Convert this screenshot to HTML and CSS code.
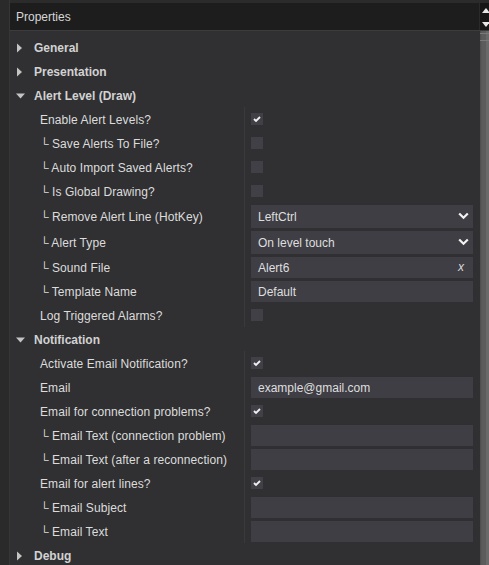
FILE: index.html
```html
<!DOCTYPE html>
<html>
<head>
<meta charset="utf-8">
<link rel="stylesheet" href="styles.css">
</head>
<body>
<div class="app">
  <div class="gutter"></div>
  <div class="win">
    <div class="header">
      <div class="title">Properties</div>
      <div class="sbtns">
        <svg width="9" height="27" viewBox="0 0 9 27"><path d="M2 10 L6 5 L10 10 Z" fill="#e8e8e8"/><path d="M2 19 L6 24 L10 19 Z" fill="#e8e8e8"/></svg>
      </div>
    </div>
    <div class="content">
      <div class="list">
        <div class="row group"><span class="tri"><svg width="10" height="10" viewBox="0 0 10 10"><path d="M1 0.5 L6 5 L1 9.5 Z" fill="#c4c4c4"/></svg></span><span class="glabel">General</span></div>
        <div class="row group"><span class="tri"><svg width="10" height="10" viewBox="0 0 10 10"><path d="M1 0.5 L6 5 L1 9.5 Z" fill="#c4c4c4"/></svg></span><span class="glabel">Presentation</span></div>
        <div class="row group"><span class="tri"><svg width="10" height="10" viewBox="0 0 10 10"><path d="M0 2.5 L9 2.5 L4.5 7.5 Z" fill="#c4c4c4"/></svg></span><span class="glabel">Alert Level (Draw)</span></div>

        <div class="row prop"><div class="label">Enable Alert Levels?</div><div class="value"><span class="cb on"><svg width="12" height="12" viewBox="0 0 12 12"><path d="M3 6 L5 8 L9 4" stroke="#f0f0f0" stroke-width="1.8" fill="none"/></svg></span></div></div>
        <div class="row prop"><div class="label">└ Save Alerts To File?</div><div class="value"><span class="cb"></span></div></div>
        <div class="row prop"><div class="label">└ Auto Import Saved Alerts?</div><div class="value"><span class="cb"></span></div></div>
        <div class="row prop"><div class="label">└ Is Global Drawing?</div><div class="value"><span class="cb"></span></div></div>
        <div class="row prop tall"><div class="label">└ Remove Alert Line (HotKey)</div><div class="value"><div class="field sel"><span>LeftCtrl</span><svg width="11" height="8" viewBox="0 0 11 8"><path d="M1.2 1.5 L5.5 5.8 L9.8 1.5" stroke="#f2f2f2" stroke-width="2.2" fill="none"/></svg></div></div></div>
        <div class="row prop tall"><div class="label">└ Alert Type</div><div class="value"><div class="field sel"><span>On level touch</span><svg width="11" height="8" viewBox="0 0 11 8"><path d="M1.2 1.5 L5.5 5.8 L9.8 1.5" stroke="#f2f2f2" stroke-width="2.2" fill="none"/></svg></div></div></div>
        <div class="row prop"><div class="label">└ Sound File</div><div class="value"><div class="field"><span>Alert6</span><span class="clear">x</span></div></div></div>
        <div class="row prop"><div class="label">└ Template Name</div><div class="value"><div class="field"><span>Default</span></div></div></div>
        <div class="row prop"><div class="label">Log Triggered Alarms?</div><div class="value"><span class="cb"></span></div></div>

        <div class="row group"><span class="tri"><svg width="10" height="10" viewBox="0 0 10 10"><path d="M0 2.5 L9 2.5 L4.5 7.5 Z" fill="#c4c4c4"/></svg></span><span class="glabel">Notification</span></div>
        <div class="row prop"><div class="label">Activate Email Notification?</div><div class="value"><span class="cb on"><svg width="12" height="12" viewBox="0 0 12 12"><path d="M3 6 L5 8 L9 4" stroke="#f0f0f0" stroke-width="1.8" fill="none"/></svg></span></div></div>
        <div class="row prop"><div class="label">Email</div><div class="value"><div class="field"><span>example@gmail.com</span></div></div></div>
        <div class="row prop"><div class="label">Email for connection problems?</div><div class="value"><span class="cb on"><svg width="12" height="12" viewBox="0 0 12 12"><path d="M3 6 L5 8 L9 4" stroke="#f0f0f0" stroke-width="1.8" fill="none"/></svg></span></div></div>
        <div class="row prop"><div class="label">└ Email Text (connection problem)</div><div class="value"><div class="field"></div></div></div>
        <div class="row prop"><div class="label">└ Email Text (after a reconnection)</div><div class="value"><div class="field"></div></div></div>
        <div class="row prop"><div class="label">Email for alert lines?</div><div class="value"><span class="cb on"><svg width="12" height="12" viewBox="0 0 12 12"><path d="M3 6 L5 8 L9 4" stroke="#f0f0f0" stroke-width="1.8" fill="none"/></svg></span></div></div>
        <div class="row prop"><div class="label">└ Email Subject</div><div class="value"><div class="field"></div></div></div>
        <div class="row prop"><div class="label">└ Email Text</div><div class="value"><div class="field"></div></div></div>

        <div class="row group"><span class="tri"><svg width="10" height="10" viewBox="0 0 10 10"><path d="M1 0.5 L6 5 L1 9.5 Z" fill="#c4c4c4"/></svg></span><span class="glabel">Debug</span></div>
      </div>
      <div class="scrollbar"><div class="thumb"></div></div>
    </div>
  </div>
</div>
</body>
</html>
```
FILE: styles.css
```css
html, body {
  margin: 0;
  padding: 0;
  background: #2b2b2b;
  height: 100%;
  overflow: hidden;
}
body {
  font-family: "Liberation Sans", Arial, sans-serif;
  font-size: 12px;
  color: #dedede;
}
.app {
  display: flex;
  height: 565px;
}
.gutter {
  width: 9px;
  background: #2a2a2a;
  border-right: 1px solid #363636;
  flex: none;
}
.win {
  flex: 1;
  display: flex;
  flex-direction: column;
  margin-top: 3px;
  background: #303032;
  min-width: 0;
}
.header {
  height: 27px;
  display: flex;
  background: #1d1d1d;
  border-bottom: 1px solid #3c3c3c;
  flex: none;
}
.title {
  flex: 1;
  padding-left: 6px;
  padding-top: 1px;
  line-height: 27px;
  color: #d6d6d6;
}
.sbtns {
  width: 9px;
  background: #171717;
  border-left: 1px solid #2a2a2a;
}
.sbtns svg { display: block; }
.content {
  flex: 1;
  display: flex;
  min-height: 0;
}
.list {
  flex: 1;
  padding-top: 4px;
  min-width: 0;
}
.scrollbar {
  width: 9px;
  flex: none;
  background: linear-gradient(to right, #4d4d4d 0, #5c5c5c 2px, #5c5c5c 6px, #6a6a6a 6px);
}
.thumb {
  height: 6px;
  margin-top: 2px;
  border-top: 1px solid #7a7a7a;
  border-bottom: 1px solid #7a7a7a;
}
.row {
  height: 24px;
  display: flex;
  align-items: center;
}
.row.tall { height: 26px; }
.group {
  padding-left: 6px;
}
.tri {
  width: 10px;
  height: 10px;
  margin-right: 8px;
  display: flex;
  margin-top: 1px;
}
.glabel {
  font-weight: bold;
  color: #d2d2d2;
  padding-top: 2px;
}
.prop .label {
  width: 234px;
  flex: none;
  padding-left: 30px;
  padding-top: 2px;
  box-sizing: border-box;
  white-space: nowrap;
  letter-spacing: 0.08px;
  color: #dcdcdc;
}
.prop .value {
  flex: 1;
  align-self: stretch;
  border-left: 1px solid #3a3a3c;
  display: flex;
  align-items: center;
  padding: 0 7px 0 6px;
  min-width: 0;
}
.cb {
  width: 12px;
  height: 12px;
  background: #414046;
  display: block;
}
.cb svg { display: block; }
.field {
  flex: 1;
  height: 21px;
  background: #3f3e45;
  display: flex;
  align-items: center;
  padding: 0 8px 0 7px;
  color: #dedede;
}
.field span:first-child { flex: 1; padding-top: 1px; }
.field.sel { height: 23px; padding-right: 4px; }
.clear {
  font-style: italic;
  color: #d8d8d8;
  padding-right: 1px;
}
```
